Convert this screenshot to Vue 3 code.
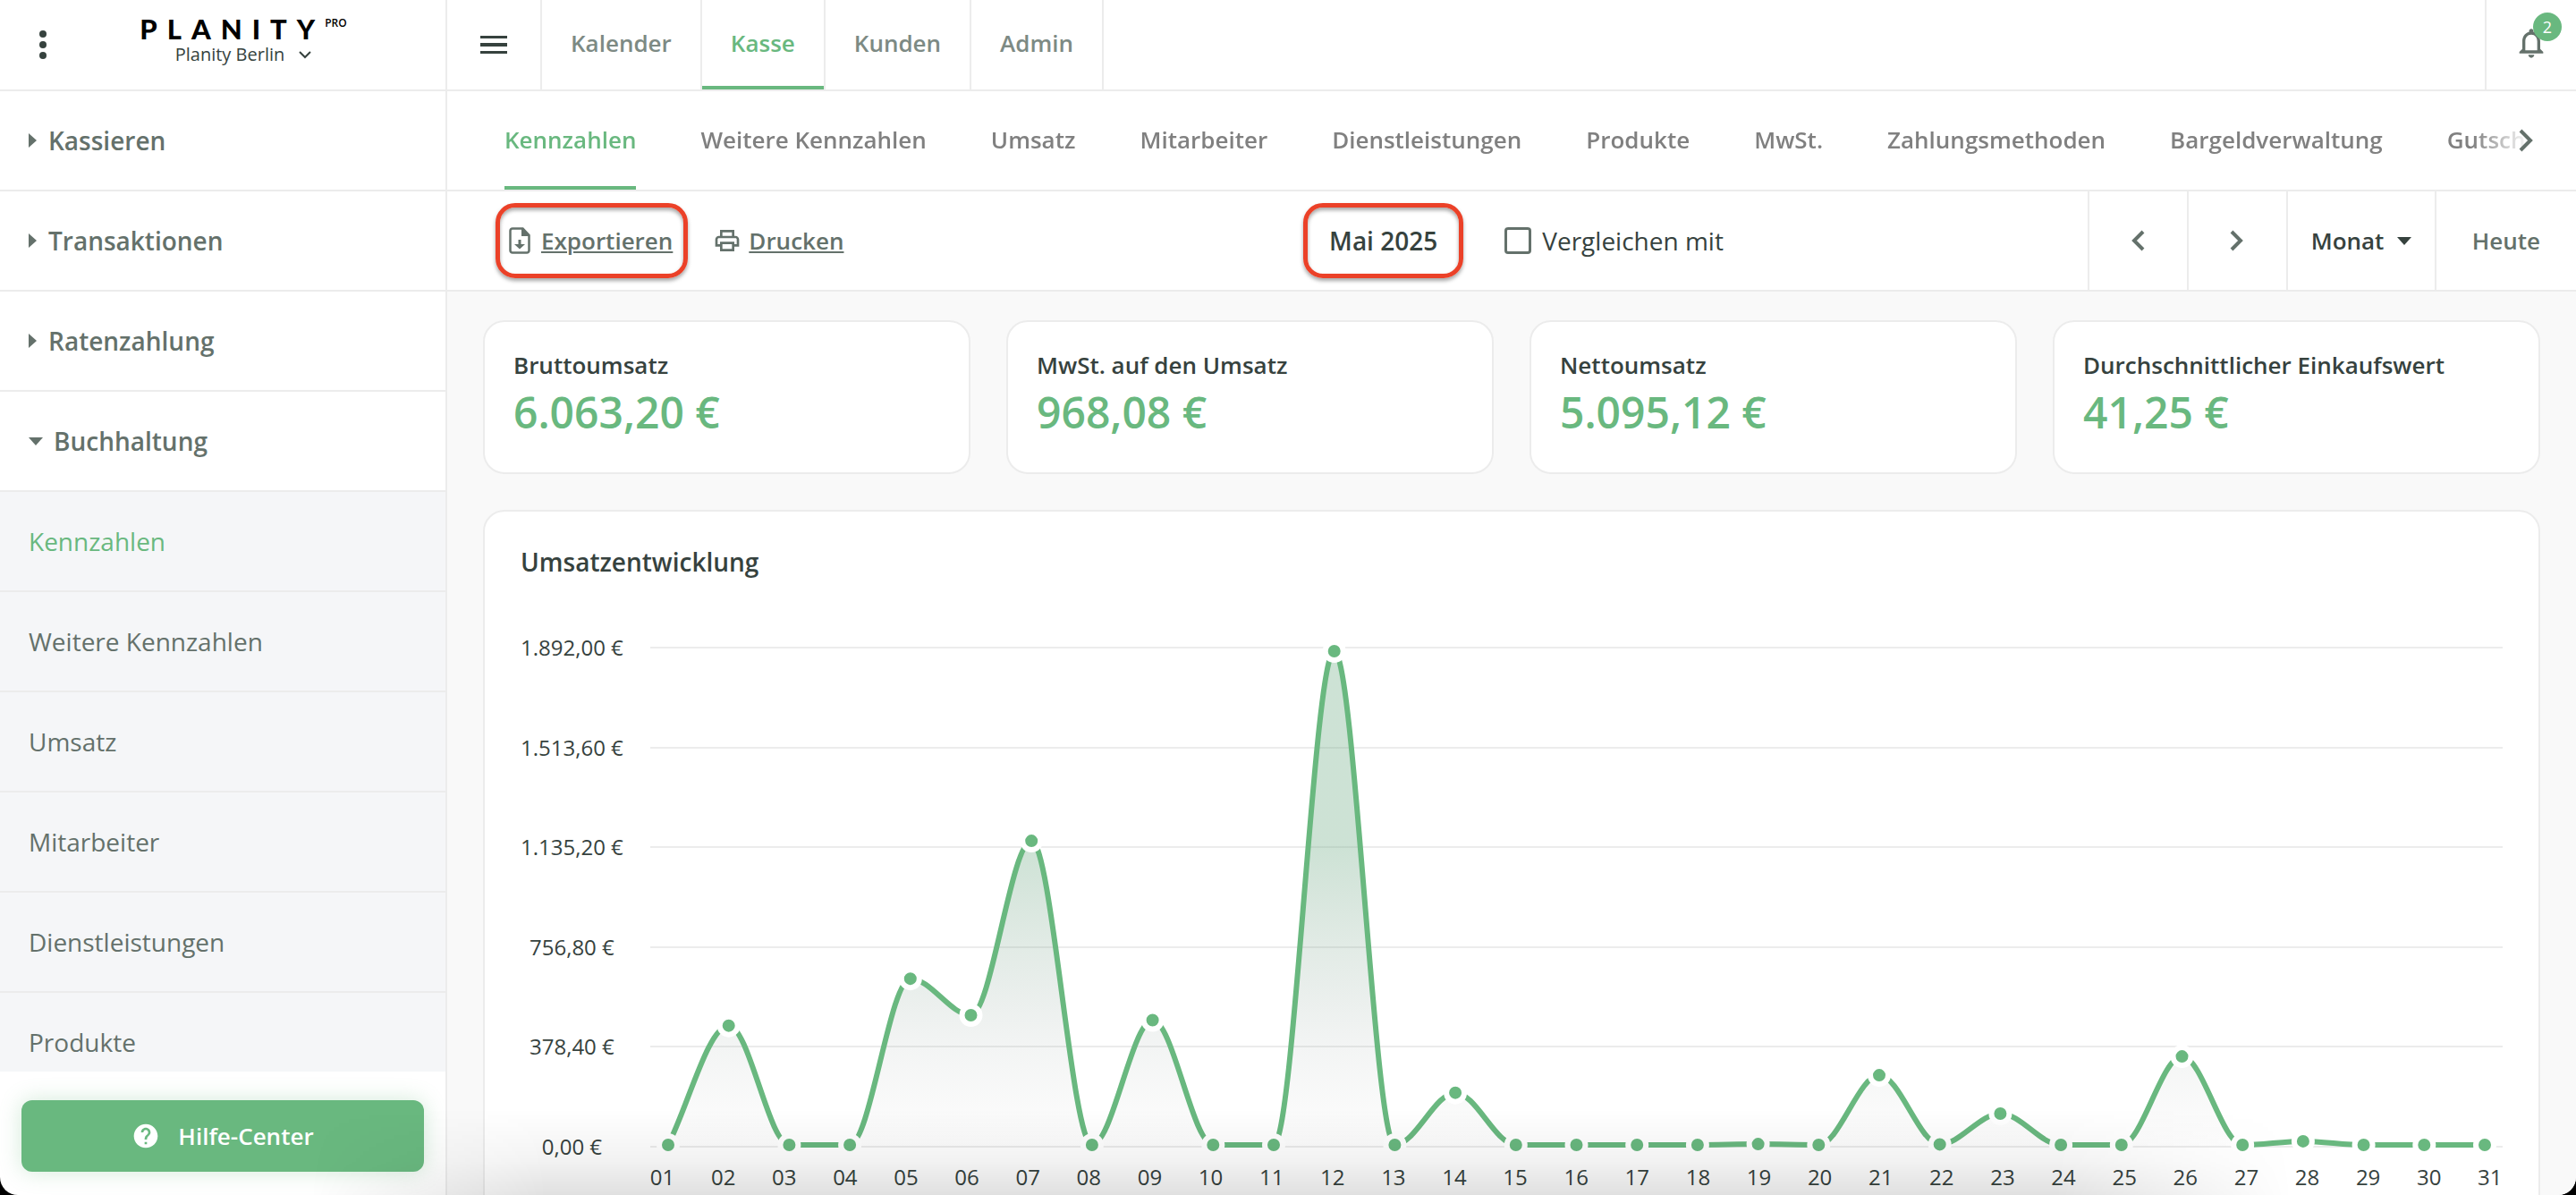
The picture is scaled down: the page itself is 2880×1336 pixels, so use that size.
<script setup>
import { ref, computed, onMounted, onBeforeUnmount } from 'vue'

const sections = ['Kassieren', 'Transaktionen', 'Ratenzahlung']
const subItems = ['Kennzahlen', 'Weitere Kennzahlen', 'Umsatz', 'Mitarbeiter', 'Dienstleistungen', 'Produkte']
const mainNav = ['Kalender', 'Kasse', 'Kunden', 'Admin']
const tabs = [
  'Kennzahlen', 'Weitere Kennzahlen', 'Umsatz', 'Mitarbeiter', 'Dienstleistungen',
  'Produkte', 'MwSt.', 'Zahlungsmethoden', 'Bargeldverwaltung', 'Gutscheine',
]
const stats = [
  { label: 'Bruttoumsatz', value: '6.063,20 €' },
  { label: 'MwSt. auf den Umsatz', value: '968,08 €' },
  { label: 'Nettoumsatz', value: '5.095,12 €' },
  { label: 'Durchschnittlicher Einkaufswert', value: '41,25 €' },
]
const axisLabels = ['1.892,00 €', '1.513,60 €', '1.135,20 €', '756,80 €', '378,40 €', '0,00 €']
const days = Array.from({ length: 31 }, (_, i) => String(i + 1).padStart(2, '0'))

const compare = ref(false)
const period = ref('Monat')

// Daily revenue in euros
const revenue = [
  0, 457, 0, 0, 637, 497, 1165, 0, 478, 0, 0, 1892, 0, 200, 0, 0,
  0, 0, 3, 0, 267, 2, 120, 0, 0, 339, 0, 14, 0, 0, 0,
]
const maxRevenue = 1892
const gridTop = 16
const gridHeight = 558
const inset = 20

const plot = ref(null)
const plotWidth = ref(2072)
let observer
onMounted(() => {
  const measure = () => { plotWidth.value = Math.round(plot.value.clientWidth) }
  measure()
  observer = new ResizeObserver(measure)
  observer.observe(plot.value)
})
onBeforeUnmount(() => observer?.disconnect())

const gridLines = axisLabels.map((_, i) => gridTop + Math.round((i * gridHeight) / 5))
const points = computed(() => {
  const step = (plotWidth.value - inset * 2) / (revenue.length - 1)
  return revenue.map((v, i) => ({
    x: inset + i * step,
    y: gridTop + gridHeight - 2 - (v / maxRevenue) * (gridHeight - 6),
  }))
})

// Monotone cubic interpolation: flat at local extrema
const linePath = computed(() => {
  const p = points.value
  const slope = (i) => (p[i + 1].y - p[i].y) / (p[i + 1].x - p[i].x)
  const tangent = p.map((_, i) => {
    if (i === 0) return slope(0)
    if (i === p.length - 1) return slope(i - 1)
    const a = slope(i - 1)
    const b = slope(i)
    return a * b <= 0 ? 0 : (2 * a * b) / (a + b)
  })
  let d = `M${p[0].x} ${p[0].y}`
  for (let i = 0; i < p.length - 1; i++) {
    const h = (p[i + 1].x - p[i].x) / 3
    d += `C${p[i].x + h} ${p[i].y + tangent[i] * h} ${p[i + 1].x - h} ${p[i + 1].y - tangent[i + 1] * h} ${p[i + 1].x} ${p[i + 1].y}`
  }
  return d
})
const areaPath = computed(() => {
  const p = points.value
  const base = gridTop + gridHeight
  return `${linePath.value}L${p[p.length - 1].x} ${base}L${p[0].x} ${base}Z`
})
</script>

<template>
  <div class="app">
    <aside class="sidebar">
      <div class="brand-bar">
        <button class="icon-btn" aria-label="Menü">
          <svg width="10" height="34" viewBox="0 0 10 34" fill="currentColor">
            <circle cx="5" cy="5" r="4" /><circle cx="5" cy="17" r="4" /><circle cx="5" cy="29" r="4" />
          </svg>
        </button>
        <div class="brand">
          <div class="logo"><span class="wordmark">PLANITY</span><span class="pro">PRO</span></div>
          <button class="location">
            Planity Berlin
            <svg width="14" height="10" viewBox="0 0 14 10" fill="none" stroke="currentColor" stroke-width="2">
              <path d="M1 2l6 6 6-6" />
            </svg>
          </button>
        </div>
      </div>

      <nav class="side-nav">
        <button v-for="s in sections" :key="s" class="section">
          <svg width="10" height="16" viewBox="0 0 10 16" fill="currentColor"><path d="M0 0l9 8-9 8z" /></svg>
          {{ s }}
        </button>
        <button class="section">
          <svg width="16" height="9" viewBox="0 0 16 9" fill="currentColor"><path d="M0 0h16L8 9z" /></svg>
          Buchhaltung
        </button>
        <a v-for="(s, i) in subItems" :key="s" href="#" class="sub" :class="{ active: i === 0 }">{{ s }}</a>
      </nav>

      <div class="help-bar">
        <button class="help">
          <svg width="32" height="32" viewBox="0 0 24 24" fill="currentColor">
            <path d="M12 2C6.48 2 2 6.48 2 12s4.480 10 10 10 10-4.480 10-10S17.520 2 12 2zm1 17h-2v-2h2v2zm2.070-7.750l-.9.920C13.450 12.900 13 13.500 13 15h-2v-.5c0-1.100.45-2.100 1.170-2.830l1.240-1.260c.37-.36.59-.86.59-1.410 0-1.100-.9-2-2-2s-2 .9-2 2H8c0-2.210 1.790-4 4-4s4 1.790 4 4c0 .88-.36 1.680-.93 2.250z" />
          </svg>
          Hilfe-Center
        </button>
      </div>
    </aside>

    <div class="content">
      <header class="topbar">
        <button class="burger" aria-label="Navigation">
          <svg width="30" height="20" viewBox="0 0 30 20" fill="currentColor">
            <path d="M0 0h30v3H0zM0 8h30v4H0zM0 17h30v3H0z" />
          </svg>
        </button>
        <nav class="main-nav">
          <a v-for="n in mainNav" :key="n" href="#" :class="{ active: n === 'Kasse' }"><span>{{ n }}</span></a>
        </nav>
        <button class="bell" aria-label="Benachrichtigungen">
          <svg width="40" height="40" viewBox="0 0 24 24" fill="currentColor">
            <path d="M12 22c1.100 0 2-.9 2-2h-4c0 1.100.9 2 2 2zm6-6v-5c0-3.070-1.630-5.640-4.500-6.320V4c0-.83-.67-1.500-1.500-1.500s-1.500.67-1.500 1.500v.68C7.640 5.360 6 7.920 6 11v5l-2 2v1h16v-1l-2-2zm-2 1H8v-6c0-2.480 1.510-4.500 4-4.500s4 2.020 4 4.500v6z" />
          </svg>
          <span class="badge">2</span>
        </button>
      </header>

      <div class="tabbar">
        <nav class="tabs">
          <a v-for="(t, i) in tabs" :key="t" href="#" :class="{ active: i === 0 }">{{ t }}</a>
        </nav>
        <button class="more" aria-label="Weiter">
          <svg width="16" height="26" viewBox="0 0 16 26" fill="none" stroke="currentColor" stroke-width="4">
            <path d="M2 2l11 11L2 24" />
          </svg>
        </button>
      </div>

      <div class="toolbar">
        <div class="actions">
          <button class="action framed">
            <svg width="28" height="30" viewBox="0 0 28 30">
              <path d="M4 1.500h11.500L22.500 9v17a2.500 2.500 0 0 1-2.500 2.500H4A2.500 2.500 0 0 1 1.500 26V4A2.500 2.500 0 0 1 4 1.500z" fill="none" stroke="currentColor" stroke-width="2.500" />
              <path d="M14 1l9 9h-9zM10.500 14h3v5H18l-6 5.500L6 19h4.500z" fill="currentColor" />
            </svg>
            <span>Exportieren</span>
          </button>
          <button class="action">
            <svg width="32" height="32" viewBox="0 0 24 24" fill="currentColor">
              <path d="M19 8h-1V3H6v5H5c-1.660 0-3 1.340-3 3v6h4v4h12v-4h4v-6c0-1.660-1.340-3-3-3zM8 5h8v3H8V5zm8 12v2H8v-4h8v2zm2-2v-2H6v2H4v-4c0-.55.45-1 1-1h14c.55 0 1 .45 1 1v4h-2z" />
            </svg>
            <span>Drucken</span>
          </button>
        </div>
        <div class="range">
          <button class="date framed">Mai 2025</button>
          <label class="compare"><input v-model="compare" type="checkbox" />Vergleichen mit</label>
        </div>
        <div class="stepper">
          <button class="step" aria-label="Zurück">
            <svg width="16" height="24" viewBox="0 0 16 24" fill="none" stroke="currentColor" stroke-width="4">
              <path d="M14 2L4 12l10 10" />
            </svg>
          </button>
          <button class="step" aria-label="Vor">
            <svg width="16" height="24" viewBox="0 0 16 24" fill="none" stroke="currentColor" stroke-width="4">
              <path d="M2 2l10 10L2 22" />
            </svg>
          </button>
          <label class="period">
            <select v-model="period" aria-label="Zeitraum"><option>Monat</option></select>
            <svg width="16" height="9" viewBox="0 0 16 9" fill="currentColor"><path d="M0 0h16L8 9z" /></svg>
          </label>
          <button class="today">Heute</button>
        </div>
      </div>

      <main class="board">
        <section class="stats">
          <article v-for="s in stats" :key="s.label" class="card stat">
            <h2>{{ s.label }}</h2>
            <p>{{ s.value }}</p>
          </article>
        </section>

        <section class="card chart">
          <h2>Umsatzentwicklung</h2>
          <div class="chart-grid">
            <div class="y-axis"><span v-for="a in axisLabels" :key="a">{{ a }}</span></div>
            <div ref="plot" class="plot">
              <svg :width="plotWidth" height="590">
                <defs>
                  <linearGradient id="area" gradientUnits="userSpaceOnUse" x1="0" y1="16" x2="0" y2="574">
                    <stop offset="0" stop-color="#6caa83" stop-opacity="0.34" />
                    <stop offset="0.4" stop-color="#6caa83" stop-opacity="0.34" />
                    <stop offset="0.6" stop-color="#74a086" stop-opacity="0.21" />
                    <stop offset="0.8" stop-color="#788a84" stop-opacity="0.09" />
                    <stop offset="1" stop-color="#808080" stop-opacity="0.01" />
                  </linearGradient>
                </defs>
                <line v-for="y in gridLines" :key="y" x1="0" :x2="plotWidth" :y1="y" :y2="y" stroke="#ececec" stroke-width="2" />
                <path :d="areaPath" fill="url(#area)" />
                <path :d="linePath" fill="none" stroke="#69b87f" stroke-width="6" />
                <circle v-for="(p, i) in points" :key="i" :cx="p.x" :cy="p.y" r="10" fill="#69b87f" stroke="#fff" stroke-width="6" />
              </svg>
            </div>
            <div class="x-axis"><span v-for="d in days" :key="d">{{ d }}</span></div>
          </div>
        </section>
      </main>
    </div>
    <div class="bottom-shade"></div>
  </div>
</template>

<style>
body {
  margin: 0;
  background: #000;
}
</style>

<style scoped>
.app {
  --green: #69b87f;
  --dark: #36423e;
  --mid: #64716b;
  --line: #ececec;
  position: relative;
  display: flex;
  height: 100vh;
  overflow: hidden;
  border-radius: 0 0 20px 20px;
  background: #fff;
  color: var(--dark);
  font-family: "Open Sans", "Noto Sans", sans-serif;
  font-size: 26px;
}
.app *, .app *::before {
  box-sizing: border-box;
}
button, select {
  margin: 0;
  padding: 0;
  border: 0;
  background: none;
  color: inherit;
  font: inherit;
}
a {
  color: inherit;
  text-decoration: none;
}
h2, p {
  margin: 0;
}
svg {
  display: block;
  flex: none;
}

/* Sidebar */
.sidebar {
  display: flex;
  flex-direction: column;
  flex: none;
  width: 500px;
  border-right: 2px solid var(--line);
}
.brand-bar {
  display: grid;
  grid-template-columns: 96px 1fr 50px;
  flex: none;
  height: 102px;
  border-bottom: 2px solid var(--line);
}
.icon-btn {
  display: flex;
  align-items: center;
  justify-content: center;
}
.brand {
  display: flex;
  flex-direction: column;
  align-items: center;
  padding-top: 14px;
}
.logo {
  display: flex;
  align-items: flex-start;
  color: #000;
}
.wordmark {
  font-family: Lato, sans-serif;
  font-weight: 900;
  font-size: 31px;
  line-height: 36px;
  letter-spacing: 11px;
}
.pro {
  font-size: 12px;
  font-weight: 600;
  line-height: 24px;
}
.location {
  display: flex;
  align-items: center;
  gap: 16px;
  font-size: 20px;
  line-height: 22px;
}
.side-nav {
  flex: 1;
  min-height: 0;
  overflow: hidden;
}
.section, .sub {
  display: flex;
  align-items: center;
  width: 100%;
  height: 112px;
  padding-left: 32px;
  border-bottom: 2px solid var(--line);
  color: var(--mid);
  font-size: 28px;
}
.section {
  gap: 12px;
  font-weight: 600;
}
.sub {
  background: #f5f6f8;
}
.sub.active {
  color: var(--green);
}
.help-bar {
  flex: none;
  padding: 32px 24px 26px;
}
.help {
  display: flex;
  align-items: center;
  justify-content: center;
  gap: 20px;
  width: 100%;
  height: 80px;
  border-radius: 12px;
  background: var(--green);
  box-shadow: 0 0 24px rgba(105, 184, 127, 0.3);
  color: #fff;
  font-weight: 600;
}

/* Top navigation */
.content {
  display: flex;
  flex-direction: column;
  flex: 1;
  min-width: 0;
}
.topbar {
  display: flex;
  flex: none;
  height: 102px;
  border-bottom: 2px solid var(--line);
}
.burger {
  display: flex;
  align-items: center;
  justify-content: center;
  width: 106px;
  border-right: 2px solid var(--line);
}
.main-nav {
  display: flex;
  flex: 1;
  color: #7d8a84;
  font-weight: 600;
}
.main-nav a {
  display: flex;
  border-right: 2px solid var(--line);
}
.main-nav span {
  display: flex;
  align-items: center;
  padding: 0 32px;
  border-bottom: 4px solid transparent;
}
.main-nav a.active span {
  border-color: var(--green);
  color: var(--green);
}
.bell {
  position: relative;
  display: flex;
  align-items: center;
  justify-content: center;
  width: 102px;
  padding-bottom: 4px;
  border-left: 2px solid var(--line);
  color: var(--mid);
}
.badge {
  position: absolute;
  top: 14px;
  right: 16px;
  width: 32px;
  height: 32px;
  border-radius: 50%;
  background: var(--green);
  color: #fff;
  font-size: 18px;
  line-height: 32px;
  text-align: center;
}

/* Tabs */
.tabbar {
  display: flex;
  flex: none;
  height: 112px;
  border-bottom: 2px solid var(--line);
}
.tabs {
  display: flex;
  flex: 1;
  gap: 72px;
  min-width: 0;
  overflow: hidden;
  padding-left: 64px;
  color: #808080;
  font-weight: 600;
  white-space: nowrap;
  -webkit-mask-image: linear-gradient(to left, transparent, #000 64px);
  mask-image: linear-gradient(to left, transparent, #000 64px);
}
.tabs a {
  display: flex;
  align-items: center;
  flex: none;
  border-top: 2px solid transparent;
  border-bottom: 4px solid transparent;
}
.tabs a.active {
  border-bottom-color: var(--green);
  color: var(--green);
}
.more {
  display: flex;
  align-items: center;
  width: 64px;
  margin-left: -12px;
  color: var(--mid);
}

/* Toolbar */
.toolbar {
  display: grid;
  grid-template-columns: 1fr auto 1fr;
  flex: none;
  height: 112px;
  border-bottom: 2px solid var(--line);
}
.actions {
  display: flex;
  align-items: center;
  gap: 28px;
  padding-left: 54px;
}
.action {
  display: flex;
  align-items: center;
  gap: 8px;
  color: var(--mid);
  font-weight: 600;
}
.action span {
  text-decoration: underline;
  text-decoration-thickness: 2px;
  text-underline-offset: 2px;
}
.framed {
  height: 84px;
  padding: 0 12px 0 10px;
  border: 5px solid #eb4128;
  border-radius: 22px;
  box-shadow: 0 3px 4px rgba(0, 0, 0, 0.35), inset 0 3px 4px rgba(0, 0, 0, 0.35);
}
.range {
  display: flex;
  align-items: center;
  gap: 46px;
  padding-left: 4px;
  font-size: 28px;
}
.date {
  padding: 0 24px;
  font-weight: 600;
}
.compare {
  display: flex;
  align-items: center;
  gap: 12px;
}
.compare input {
  appearance: none;
  width: 30px;
  height: 30px;
  margin: 0;
  border: 3px solid var(--mid);
  border-radius: 4px;
}
.compare input:checked {
  background: var(--green);
}
.stepper {
  display: flex;
  justify-content: flex-end;
}
.stepper > * {
  display: flex;
  align-items: center;
  justify-content: center;
  border-left: 2px solid var(--line);
  color: var(--mid);
}
.step {
  width: 111px;
}
.stepper .period {
  gap: 14px;
  padding: 0 26px;
  color: var(--dark);
  font-weight: 600;
}
.period select {
  appearance: none;
}
.today {
  padding: 0 40px;
  font-weight: 600;
}

/* Board */
.board {
  display: flex;
  flex-direction: column;
  flex: 1;
  gap: 40px;
  min-height: 0;
  overflow: hidden;
  padding: 32px 40px 0;
  background: #f9f9f9;
}
.card {
  flex: none;
  border: 2px solid var(--line);
  border-radius: 24px;
  background: #fff;
}
.stats {
  display: grid;
  grid-template-columns: repeat(4, 1fr);
  gap: 40px;
}
.stat {
  padding: 32px 32px 30px;
}
.stat h2 {
  font-size: 26px;
  font-weight: 600;
  line-height: 32px;
}
.stat p {
  color: var(--green);
  font-size: 48px;
  font-weight: 600;
  line-height: 74px;
}
.chart {
  padding: 40px;
}
.chart h2 {
  margin-bottom: 64px;
  font-size: 28px;
  font-weight: 600;
  line-height: 32px;
}
.chart-grid {
  display: grid;
  grid-template-columns: auto 1fr;
  gap: 2px 30px;
  font-size: 24px;
  line-height: 32px;
}
.y-axis {
  display: flex;
  flex-direction: column;
  align-items: center;
  justify-content: space-between;
}
.plot {
  min-width: 0;
  height: 590px;
  overflow: hidden;
}
.x-axis {
  display: flex;
  grid-column: 2;
  justify-content: space-between;
}
.bottom-shade {
  position: absolute;
  right: 11%;
  bottom: 0;
  left: 12%;
  height: 96px;
  background: linear-gradient(to top, rgba(0, 0, 0, 0.12), rgba(0, 0, 0, 0.05) 40%, transparent);
  -webkit-mask-image: linear-gradient(to right, transparent, #000 12%, #000 88%, transparent);
  mask-image: linear-gradient(to right, transparent, #000 12%, #000 88%, transparent);
  pointer-events: none;
}
</style>
